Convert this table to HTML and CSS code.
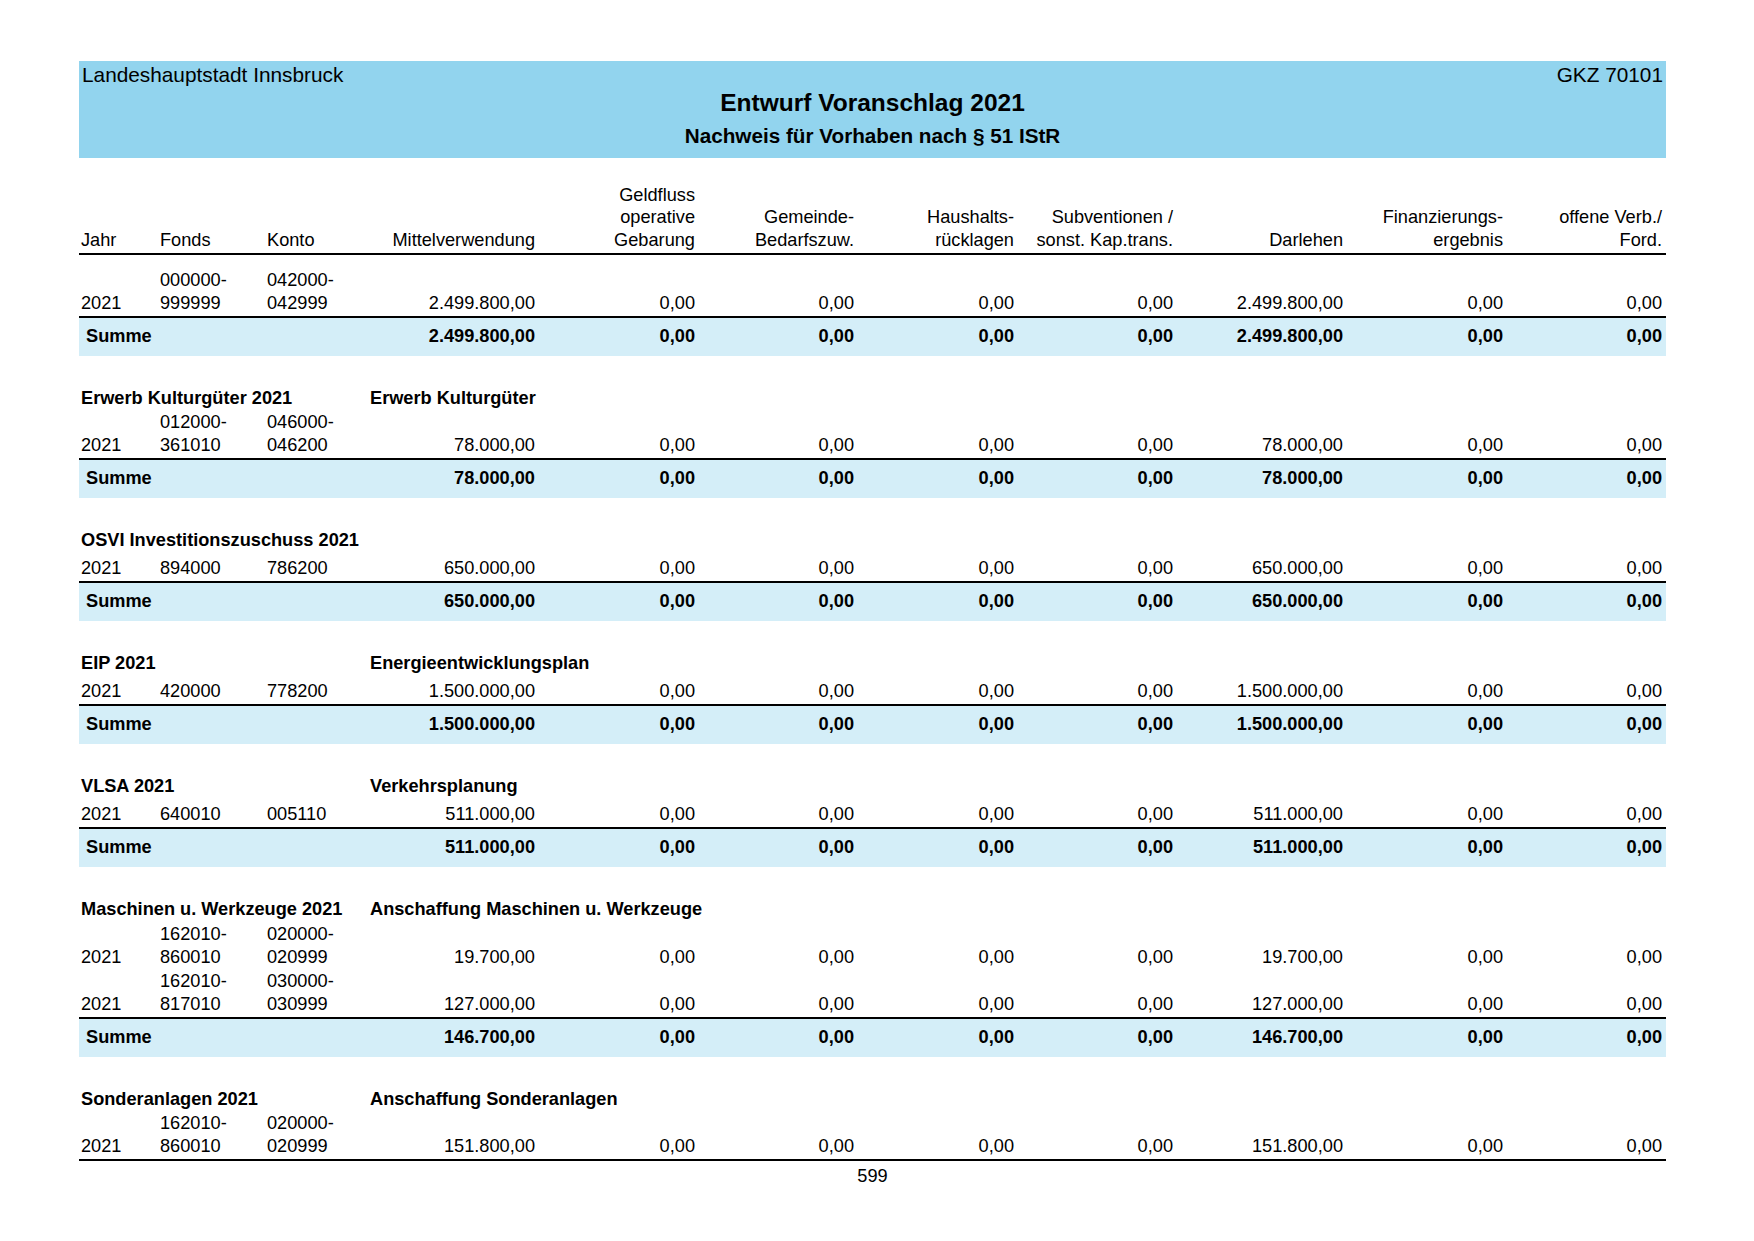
FILE: index.html
```html
<!DOCTYPE html>
<html lang="de">
<head>
<meta charset="utf-8">
<title>Entwurf Voranschlag 2021</title>
<link rel="stylesheet" href="styles.css">
</head>
<body>
<div class="page">
  <div class="sheet">
    <header class="banner">
      <div class="banner-top"><span>Landeshauptstadt Innsbruck</span><span>GKZ 70101</span></div>
      <h1>Entwurf Voranschlag 2021</h1>
      <h2>Nachweis für Vorhaben nach § 51 IStR</h2>
    </header>

    <div class="table">
      <div class="row head">
        <span>Jahr</span><span>Fonds</span><span>Konto</span>
        <span class="num">Mittelverwendung</span>
        <span class="num">Geldfluss<br>operative<br>Gebarung</span>
        <span class="num">Gemeinde-<br>Bedarfszuw.</span>
        <span class="num">Haushalts-<br>rücklagen</span>
        <span class="num">Subventionen /<br>sonst. Kap.trans.</span>
        <span class="num">Darlehen</span>
        <span class="num">Finanzierungs-<br>ergebnis</span>
        <span class="num">offene Verb./<br>Ford.</span>
      </div>

      <section class="group first">
        <div class="rows">
          <div class="row data">
            <span>2021</span><span>000000-<br>999999</span><span>042000-<br>042999</span>
            <span class="num">2.499.800,00</span><span class="num">0,00</span><span class="num">0,00</span><span class="num">0,00</span><span class="num">0,00</span>
            <span class="num">2.499.800,00</span><span class="num">0,00</span><span class="num">0,00</span>
          </div>
        </div>
        <div class="row sum">
          <span class="label">Summe</span>
          <span class="num">2.499.800,00</span><span class="num">0,00</span><span class="num">0,00</span><span class="num">0,00</span><span class="num">0,00</span>
          <span class="num">2.499.800,00</span><span class="num">0,00</span><span class="num">0,00</span>
        </div>
      </section>

      <section class="group">
        <div class="row title"><span class="t1">Erwerb Kulturgüter 2021</span><span class="t2">Erwerb Kulturgüter</span></div>
        <div class="rows">
          <div class="row data">
            <span>2021</span><span>012000-<br>361010</span><span>046000-<br>046200</span>
            <span class="num">78.000,00</span><span class="num">0,00</span><span class="num">0,00</span><span class="num">0,00</span><span class="num">0,00</span>
            <span class="num">78.000,00</span><span class="num">0,00</span><span class="num">0,00</span>
          </div>
        </div>
        <div class="row sum">
          <span class="label">Summe</span>
          <span class="num">78.000,00</span><span class="num">0,00</span><span class="num">0,00</span><span class="num">0,00</span><span class="num">0,00</span>
          <span class="num">78.000,00</span><span class="num">0,00</span><span class="num">0,00</span>
        </div>
      </section>

      <section class="group">
        <div class="row title"><span class="t1">OSVI Investitionszuschuss 2021</span><span class="t2"></span></div>
        <div class="rows">
          <div class="row data">
            <span>2021</span><span>894000</span><span>786200</span>
            <span class="num">650.000,00</span><span class="num">0,00</span><span class="num">0,00</span><span class="num">0,00</span><span class="num">0,00</span>
            <span class="num">650.000,00</span><span class="num">0,00</span><span class="num">0,00</span>
          </div>
        </div>
        <div class="row sum">
          <span class="label">Summe</span>
          <span class="num">650.000,00</span><span class="num">0,00</span><span class="num">0,00</span><span class="num">0,00</span><span class="num">0,00</span>
          <span class="num">650.000,00</span><span class="num">0,00</span><span class="num">0,00</span>
        </div>
      </section>

      <section class="group">
        <div class="row title"><span class="t1">EIP 2021</span><span class="t2">Energieentwicklungsplan</span></div>
        <div class="rows">
          <div class="row data">
            <span>2021</span><span>420000</span><span>778200</span>
            <span class="num">1.500.000,00</span><span class="num">0,00</span><span class="num">0,00</span><span class="num">0,00</span><span class="num">0,00</span>
            <span class="num">1.500.000,00</span><span class="num">0,00</span><span class="num">0,00</span>
          </div>
        </div>
        <div class="row sum">
          <span class="label">Summe</span>
          <span class="num">1.500.000,00</span><span class="num">0,00</span><span class="num">0,00</span><span class="num">0,00</span><span class="num">0,00</span>
          <span class="num">1.500.000,00</span><span class="num">0,00</span><span class="num">0,00</span>
        </div>
      </section>

      <section class="group">
        <div class="row title"><span class="t1">VLSA 2021</span><span class="t2">Verkehrsplanung</span></div>
        <div class="rows">
          <div class="row data">
            <span>2021</span><span>640010</span><span>005110</span>
            <span class="num">511.000,00</span><span class="num">0,00</span><span class="num">0,00</span><span class="num">0,00</span><span class="num">0,00</span>
            <span class="num">511.000,00</span><span class="num">0,00</span><span class="num">0,00</span>
          </div>
        </div>
        <div class="row sum">
          <span class="label">Summe</span>
          <span class="num">511.000,00</span><span class="num">0,00</span><span class="num">0,00</span><span class="num">0,00</span><span class="num">0,00</span>
          <span class="num">511.000,00</span><span class="num">0,00</span><span class="num">0,00</span>
        </div>
      </section>

      <section class="group">
        <div class="row title"><span class="t1">Maschinen u. Werkzeuge 2021</span><span class="t2">Anschaffung Maschinen u. Werkzeuge</span></div>
        <div class="rows">
          <div class="row data">
            <span>2021</span><span>162010-<br>860010</span><span>020000-<br>020999</span>
            <span class="num">19.700,00</span><span class="num">0,00</span><span class="num">0,00</span><span class="num">0,00</span><span class="num">0,00</span>
            <span class="num">19.700,00</span><span class="num">0,00</span><span class="num">0,00</span>
          </div>
          <div class="row data">
            <span>2021</span><span>162010-<br>817010</span><span>030000-<br>030999</span>
            <span class="num">127.000,00</span><span class="num">0,00</span><span class="num">0,00</span><span class="num">0,00</span><span class="num">0,00</span>
            <span class="num">127.000,00</span><span class="num">0,00</span><span class="num">0,00</span>
          </div>
        </div>
        <div class="row sum">
          <span class="label">Summe</span>
          <span class="num">146.700,00</span><span class="num">0,00</span><span class="num">0,00</span><span class="num">0,00</span><span class="num">0,00</span>
          <span class="num">146.700,00</span><span class="num">0,00</span><span class="num">0,00</span>
        </div>
      </section>

      <section class="group">
        <div class="row title"><span class="t1">Sonderanlagen 2021</span><span class="t2">Anschaffung Sonderanlagen</span></div>
        <div class="rows">
          <div class="row data">
            <span>2021</span><span>162010-<br>860010</span><span>020000-<br>020999</span>
            <span class="num">151.800,00</span><span class="num">0,00</span><span class="num">0,00</span><span class="num">0,00</span><span class="num">0,00</span>
            <span class="num">151.800,00</span><span class="num">0,00</span><span class="num">0,00</span>
          </div>
        </div>
      </section>
    </div>

    <div class="pageno">599</div>
  </div>
</div>
</body>
</html>
```

FILE: styles.css
```css
* {
  box-sizing: border-box;
  margin: 0;
  padding: 0;
}

html, body {
  background: #ffffff;
}

body {
  margin: 0;
  font-family: "Liberation Sans", Arial, sans-serif;
  color: #000000;
}

.page {
  width: 1754px;
  padding: 61px 0 0 79px;
}

.sheet {
  width: 1587px;
}

/* ---------- banner ---------- */
.banner {
  background: #92d4ee;
  height: 97px;
  padding: 2px 3px 0 3px;
}

.banner-top {
  display: flex;
  justify-content: space-between;
  font-size: 20.8px;
  line-height: 24px;
}

.banner h1 {
  font-size: 24.5px;
  line-height: 28px;
  font-weight: bold;
  text-align: center;
  margin-top: 2px;
}

.banner h2 {
  font-size: 20.7px;
  line-height: 26px;
  font-weight: bold;
  text-align: center;
  margin-top: 6px;
}

/* ---------- table ---------- */
.table {
  margin-top: 25.5px;
  font-size: 18.2px;
  line-height: 23px;
}

.row {
  display: grid;
  grid-template-columns: 79px 107px 103px 171px 160px 159px 160px 159px 170px 160px 159px;
  align-items: end;
}

.row > span {
  padding: 0 4px 0 2px;
  white-space: nowrap;
}

.num {
  text-align: right;
}

.head {
  line-height: 22.5px;
  padding-bottom: 2px;
  border-bottom: 2px solid #000000;
}

.title {
  padding-top: 31px;
  padding-bottom: 0.5px;
  font-weight: bold;
}

.title .t1 {
  grid-column: 1 / 4;
}

.title .t2 {
  grid-column: 4 / 12;
}

.rows {
  border-bottom: 2px solid #000000;
}

.first .rows {
  padding-top: 13px;
}

.data {
  min-height: 28.5px;
  padding: 1.2px 0 0.5px 0;
}

.sum {
  height: 38px;
  line-height: 37px;
  background: #d4eef8;
  font-weight: bold;
  align-items: start;
}

.sum .label {
  grid-column: 1 / 4;
  padding-left: 7px;
}

.pageno {
  margin-top: 4px;
  text-align: center;
  font-size: 18.2px;
  line-height: 23px;
}
```
